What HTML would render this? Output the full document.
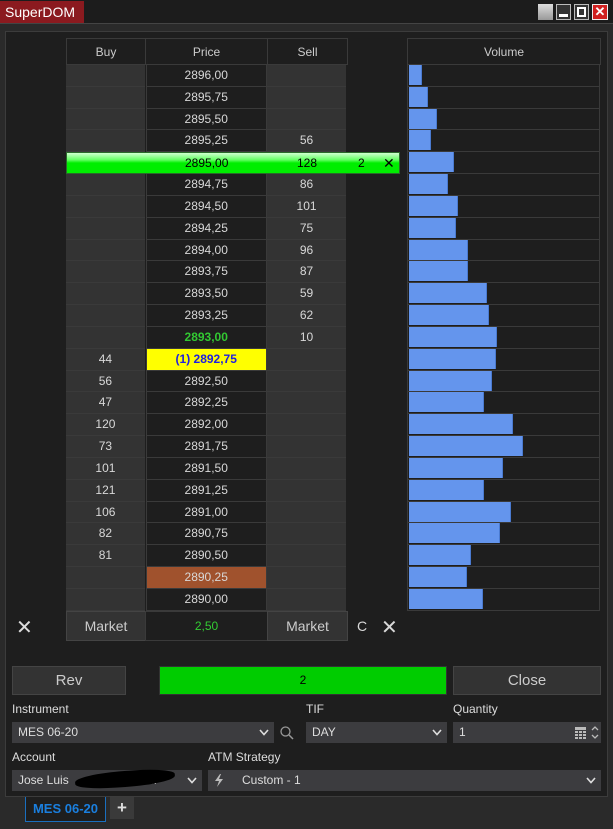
<!DOCTYPE html>
<html><head><style>
*{box-sizing:border-box;margin:0;padding:0}
body{width:613px;height:829px;background:#2a2a2a;font-family:"Liberation Sans",sans-serif;color:#d8d8d8;position:relative;overflow:hidden;font-size:12px}
.a{position:absolute}
#title{left:0;top:0;width:613px;height:24px;background:#1c1c1c;border-bottom:1px solid #444}
#tt{left:0;top:1px;width:84px;height:22px;background:#8b1a1f;color:#fff;font-size:14px;line-height:22px;padding-left:5px}
#main{left:5px;top:31px;width:603px;height:766px;background:#1e1e1e;border:1px solid #3c3c3c}
.rows{left:66px;top:65px;width:534px}
.r{height:21.84px;display:flex;font-size:12px;line-height:21px;text-align:center}
.r div{border-bottom:1px solid #3a3a3a}
.b{width:79px;background:#333;margin-right:1px}
.p{width:121px;background:#1e1e1e;border-left:1px solid #3a3a3a;border-right:1px solid #3a3a3a}
.s{width:80px;background:#333}
.g{width:61px;border:none!important}
.v{width:193px;background:#1e1e1e;border-left:1px solid #3a3a3a;border-right:1px solid #3a3a3a;position:relative}
.v i{position:absolute;left:1px;top:0;height:20px;background:#6495ed;border-right:1px solid #4a7ad0}
.hd{top:38px;height:27px;background:#1e1e1e;border:1px solid #3a3a3a;text-align:center;line-height:26px;font-size:12px;color:#ccc}
.btn{background:#333;border:1px solid #444;text-align:center;color:#ccc}
.lbl{font-size:12px;color:#ddd}
.inp{background:#3c3c3f;height:21px;font-size:12px;line-height:21px;padding-left:6px;color:#ddd}
.chev{position:absolute;right:5px;top:7px;width:10px;height:7px}
</style></head><body>
<div id="title" class="a"></div>
<div id="tt" class="a">SuperDOM</div>
<div class="a" style="left:538px;top:4px;width:15px;height:16px;background:linear-gradient(#ddd,#999)"></div>
<div class="a" style="left:556px;top:4px;width:15px;height:16px;background:#333;border:1px solid #bbb"><div class="a" style="left:2px;top:9px;width:9px;height:3px;background:#fff"></div></div>
<div class="a" style="left:574px;top:4px;width:15px;height:16px;background:#333;border:1px solid #bbb"><div class="a" style="left:2px;top:2px;width:9px;height:10px;border:2px solid #fff"></div></div>
<div class="a" style="left:592px;top:4px;width:16px;height:16px;background:#d02020;border:1px solid #eee;color:#fff;font-weight:bold;font-size:13px;line-height:14px;text-align:center">✕</div>
<div id="main" class="a"></div>
<div class="a hd" style="left:66px;width:80px">Buy</div>
<div class="a hd" style="left:145px;width:123px">Price</div>
<div class="a hd" style="left:267px;width:81px">Sell</div>
<div class="a hd" style="left:407px;width:194px">Volume</div>
<div class="a rows">
<div class="r"><div class="b"></div><div class="p">2896,00</div><div class="s"></div><div class="g"></div><div class="v"><i style="width:13px"></i></div></div>
<div class="r"><div class="b"></div><div class="p">2895,75</div><div class="s"></div><div class="g"></div><div class="v"><i style="width:19px"></i></div></div>
<div class="r"><div class="b"></div><div class="p">2895,50</div><div class="s"></div><div class="g"></div><div class="v"><i style="width:28px"></i></div></div>
<div class="r"><div class="b"></div><div class="p">2895,25</div><div class="s">56</div><div class="g"></div><div class="v"><i style="width:22px"></i></div></div>
<div class="r"><div class="b"></div><div class="p">2895,00</div><div class="s">128</div><div class="g"></div><div class="v"><i style="width:45px"></i></div></div>
<div class="r"><div class="b"></div><div class="p">2894,75</div><div class="s">86</div><div class="g"></div><div class="v"><i style="width:39px"></i></div></div>
<div class="r"><div class="b"></div><div class="p">2894,50</div><div class="s">101</div><div class="g"></div><div class="v"><i style="width:49px"></i></div></div>
<div class="r"><div class="b"></div><div class="p">2894,25</div><div class="s">75</div><div class="g"></div><div class="v"><i style="width:47px"></i></div></div>
<div class="r"><div class="b"></div><div class="p">2894,00</div><div class="s">96</div><div class="g"></div><div class="v"><i style="width:59px"></i></div></div>
<div class="r"><div class="b"></div><div class="p">2893,75</div><div class="s">87</div><div class="g"></div><div class="v"><i style="width:59px"></i></div></div>
<div class="r"><div class="b"></div><div class="p">2893,50</div><div class="s">59</div><div class="g"></div><div class="v"><i style="width:78px"></i></div></div>
<div class="r"><div class="b"></div><div class="p">2893,25</div><div class="s">62</div><div class="g"></div><div class="v"><i style="width:80px"></i></div></div>
<div class="r"><div class="b"></div><div class="p" style="color:#32c832;font-weight:bold">2893,00</div><div class="s">10</div><div class="g"></div><div class="v"><i style="width:88px"></i></div></div>
<div class="r"><div class="b">44</div><div class="p" style="background:#ffff00;color:#2020e0;font-weight:bold">(1) 2892,75</div><div class="s"></div><div class="g"></div><div class="v"><i style="width:87px"></i></div></div>
<div class="r"><div class="b">56</div><div class="p">2892,50</div><div class="s"></div><div class="g"></div><div class="v"><i style="width:83px"></i></div></div>
<div class="r"><div class="b">47</div><div class="p">2892,25</div><div class="s"></div><div class="g"></div><div class="v"><i style="width:75px"></i></div></div>
<div class="r"><div class="b">120</div><div class="p">2892,00</div><div class="s"></div><div class="g"></div><div class="v"><i style="width:104px"></i></div></div>
<div class="r"><div class="b">73</div><div class="p">2891,75</div><div class="s"></div><div class="g"></div><div class="v"><i style="width:114px"></i></div></div>
<div class="r"><div class="b">101</div><div class="p">2891,50</div><div class="s"></div><div class="g"></div><div class="v"><i style="width:94px"></i></div></div>
<div class="r"><div class="b">121</div><div class="p">2891,25</div><div class="s"></div><div class="g"></div><div class="v"><i style="width:75px"></i></div></div>
<div class="r"><div class="b">106</div><div class="p">2891,00</div><div class="s"></div><div class="g"></div><div class="v"><i style="width:102px"></i></div></div>
<div class="r"><div class="b">82</div><div class="p">2890,75</div><div class="s"></div><div class="g"></div><div class="v"><i style="width:91px"></i></div></div>
<div class="r"><div class="b">81</div><div class="p">2890,50</div><div class="s"></div><div class="g"></div><div class="v"><i style="width:62px"></i></div></div>
<div class="r"><div class="b"></div><div class="p" style="background:#a0522d">2890,25</div><div class="s"></div><div class="g"></div><div class="v"><i style="width:58px"></i></div></div>
<div class="r"><div class="b"></div><div class="p">2890,00</div><div class="s"></div><div class="g"></div><div class="v"><i style="width:74px"></i></div></div>
</div>
<div class="a" style="left:66px;top:152px;width:334px;height:22px;background:linear-gradient(#d0ffd0 0%,#60ff60 35%,#00ee00 50%,#00ee00 100%);border:1px solid #2a6a2a;color:#000;font-size:12px;line-height:20px">
<span class="a" style="left:118px">2895,00</span><span class="a" style="left:230px">128</span><span class="a" style="left:291px">2</span><span class="a" style="left:316px;font-size:14px">✕</span></div>
<div class="a" style="left:16px;top:615px;font-size:20px;color:#ddd">✕</div>
<div class="a btn" style="left:66px;top:611px;width:80px;height:30px;line-height:28px;font-size:14px">Market</div>
<div class="a" style="left:145px;top:611px;width:123px;height:30px;background:#1e1e1e;border:1px solid #3a3a3a;text-align:center;line-height:28px;color:#3c3;font-size:12px">2,50</div>
<div class="a btn" style="left:267px;top:611px;width:81px;height:30px;line-height:28px;font-size:14px">Market</div>
<div class="a" style="left:357px;top:618px;font-size:14px">C</div>
<div class="a" style="left:381px;top:615px;font-size:20px">✕</div>
<div class="a btn" style="left:12px;top:666px;width:114px;height:29px;line-height:27px;font-size:15px">Rev</div>
<div class="a" style="left:159px;top:666px;width:288px;height:29px;background:#00cc00;border:1px solid #333;color:#000;text-align:center;line-height:27px;font-size:12px">2</div>
<div class="a btn" style="left:453px;top:666px;width:148px;height:29px;line-height:27px;font-size:15px">Close</div>
<div class="a lbl" style="left:12px;top:702px">Instrument</div>
<div class="a lbl" style="left:306px;top:702px">TIF</div>
<div class="a lbl" style="left:453px;top:702px">Quantity</div>
<div class="a inp" style="left:12px;top:722px;width:262px">MES 06-20<svg class="chev" viewBox="0 0 10 7"><polyline points="1,1 5,5.5 9,1" fill="none" stroke="#ddd" stroke-width="1.6"/></svg></div>
<svg class="a" style="left:279px;top:725px" width="16" height="16" viewBox="0 0 16 16"><circle cx="6.5" cy="6.5" r="4.5" fill="none" stroke="#999" stroke-width="1.3"/><line x1="10" y1="10" x2="14" y2="14" stroke="#999" stroke-width="1.5"/></svg>
<div class="a inp" style="left:306px;top:722px;width:141px">DAY<svg class="chev" viewBox="0 0 10 7"><polyline points="1,1 5,5.5 9,1" fill="none" stroke="#ddd" stroke-width="1.6"/></svg></div>
<div class="a inp" style="left:453px;top:722px;width:148px">1
<svg class="a" style="right:15px;top:5px" width="11" height="12" viewBox="0 0 11 12"><rect x="0" y="0" width="11" height="3" fill="#bbb"/><g fill="#bbb"><rect x="0" y="4" width="3" height="2"/><rect x="4" y="4" width="3" height="2"/><rect x="8" y="4" width="3" height="2"/><rect x="0" y="7" width="3" height="2"/><rect x="4" y="7" width="3" height="2"/><rect x="8" y="7" width="3" height="2"/><rect x="0" y="10" width="3" height="2"/><rect x="4" y="10" width="3" height="2"/><rect x="8" y="10" width="3" height="2"/></g></svg>
<svg class="a" style="right:2px;top:3px" width="8" height="15" viewBox="0 0 8 15"><polyline points="1,5 4,2 7,5" fill="none" stroke="#bbb" stroke-width="1.3"/><polyline points="1,10 4,13 7,10" fill="none" stroke="#bbb" stroke-width="1.3"/></svg></div>
<div class="a lbl" style="left:12px;top:750px">Account</div>
<div class="a lbl" style="left:208px;top:750px">ATM Strategy</div>
<div class="a inp" style="left:12px;top:770px;width:190px">Jose Luis <span style="position:absolute;left:135px">...</span><svg class="chev" viewBox="0 0 10 7"><polyline points="1,1 5,5.5 9,1" fill="none" stroke="#ddd" stroke-width="1.6"/></svg></div>
<div class="a" style="left:75px;top:771px;width:100px;height:16px;background:#000;border-radius:50% 40% 50% 40%;transform:rotate(-4deg)"></div>
<div class="a inp" style="left:208px;top:770px;width:393px"><svg class="a" style="left:6px;top:4px" width="10" height="13" viewBox="0 0 10 13"><path d="M6 0 L1 7 L5 7 L3 13 L9 5 L5 5 L7 0Z" fill="#bbb"/></svg><span style="position:absolute;left:34px">Custom - 1</span><svg class="chev" viewBox="0 0 10 7"><polyline points="1,1 5,5.5 9,1" fill="none" stroke="#ddd" stroke-width="1.6"/></svg></div>
<div class="a" style="left:25px;top:797px;width:81px;height:25px;background:#1e1e1e;border:1px solid #1a6fbf;border-top:none;color:#1a7fdf;font-weight:bold;font-size:13px;line-height:23px;text-align:center">MES 06-20</div>
<div class="a" style="left:110px;top:797px;width:24px;height:22px;background:#3a3a3a;color:#ddd;font-size:17px;line-height:21px;text-align:center;font-weight:bold">+</div>
</body></html>
